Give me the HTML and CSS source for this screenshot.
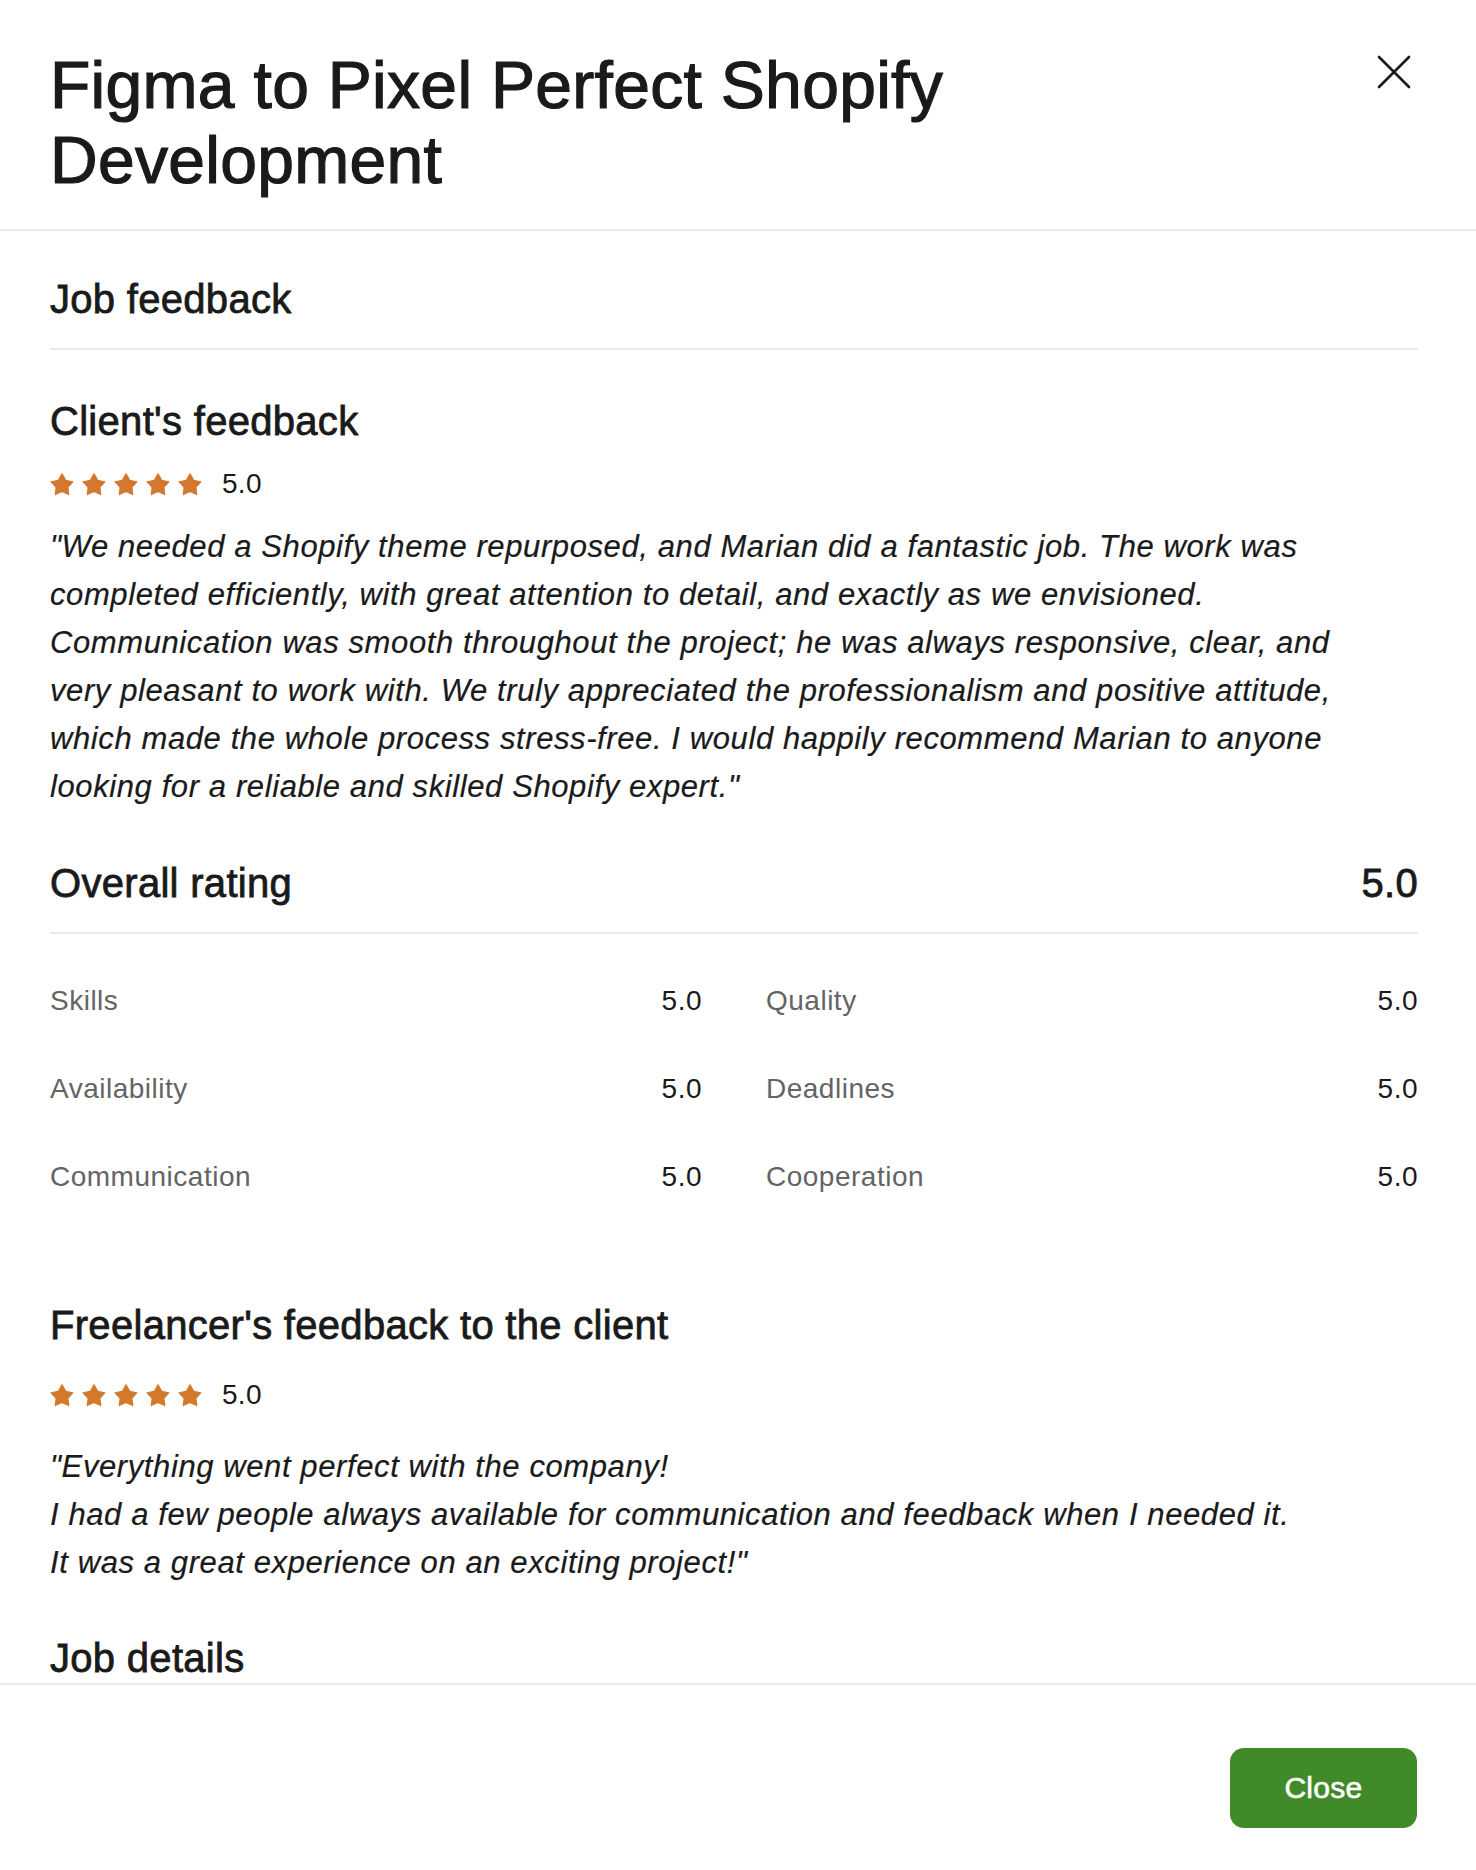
FILE: index.html
```html
<!DOCTYPE html>
<html lang="en">
<head>
<meta charset="utf-8">
<title>Job feedback</title>
<link rel="stylesheet" href="styles.css">
</head>
<body>
<div class="modal">
  <header class="modal-header">
    <h1 class="modal-title">Figma to Pixel Perfect Shopify Development</h1>
    <button class="close-x" aria-label="Close">
      <svg width="34" height="34" viewBox="0 0 34 34"><path d="M2 2 L32 32 M32 2 L2 32" stroke="#1a1a1a" stroke-width="2.6" stroke-linecap="round" fill="none"/></svg>
    </button>
  </header>

  <main class="modal-body">
    <h2 class="section-title job-feedback">Job feedback</h2>

    <h3 class="section-title client-title">Client's feedback</h3>
    <div class="stars-row client-stars">
      <span class="stars">
        <svg class="star" viewBox="0 0 24 23"><path d="M12 0.9L15.6 7.4L22.8 8.8L17.8 14.2L18.7 21.5L12 18.4L5.3 21.5L6.2 14.2L1.2 8.8L8.4 7.4Z"/></svg>
        <svg class="star" viewBox="0 0 24 23"><path d="M12 0.9L15.6 7.4L22.8 8.8L17.8 14.2L18.7 21.5L12 18.4L5.3 21.5L6.2 14.2L1.2 8.8L8.4 7.4Z"/></svg>
        <svg class="star" viewBox="0 0 24 23"><path d="M12 0.9L15.6 7.4L22.8 8.8L17.8 14.2L18.7 21.5L12 18.4L5.3 21.5L6.2 14.2L1.2 8.8L8.4 7.4Z"/></svg>
        <svg class="star" viewBox="0 0 24 23"><path d="M12 0.9L15.6 7.4L22.8 8.8L17.8 14.2L18.7 21.5L12 18.4L5.3 21.5L6.2 14.2L1.2 8.8L8.4 7.4Z"/></svg>
        <svg class="star" viewBox="0 0 24 23"><path d="M12 0.9L15.6 7.4L22.8 8.8L17.8 14.2L18.7 21.5L12 18.4L5.3 21.5L6.2 14.2L1.2 8.8L8.4 7.4Z"/></svg>
      </span>
      <span class="stars-value">5.0</span>
    </div>
    <p class="quote client-quote">"We needed a Shopify theme repurposed, and Marian did a fantastic job. The work was<br>completed efficiently, with great attention to detail, and exactly as we envisioned.<br>Communication was smooth throughout the project; he was always responsive, clear, and<br>very pleasant to work with. We truly appreciated the professionalism and positive attitude,<br>which made the whole process stress-free. I would happily recommend Marian to anyone<br>looking for a reliable and skilled Shopify expert."</p>

    <div class="overall">
      <h3 class="section-title">Overall rating</h3>
      <span class="overall-value">5.0</span>
    </div>

    <div class="ratings">
      <div class="rating"><span class="rating-label">Skills</span><span class="rating-value">5.0</span></div>
      <div class="rating"><span class="rating-label">Quality</span><span class="rating-value">5.0</span></div>
      <div class="rating"><span class="rating-label">Availability</span><span class="rating-value">5.0</span></div>
      <div class="rating"><span class="rating-label">Deadlines</span><span class="rating-value">5.0</span></div>
      <div class="rating"><span class="rating-label">Communication</span><span class="rating-value">5.0</span></div>
      <div class="rating"><span class="rating-label">Cooperation</span><span class="rating-value">5.0</span></div>
    </div>

    <h3 class="section-title freelancer-title">Freelancer's feedback to the client</h3>
    <div class="stars-row freelancer-stars">
      <span class="stars">
        <svg class="star" viewBox="0 0 24 23"><path d="M12 0.9L15.6 7.4L22.8 8.8L17.8 14.2L18.7 21.5L12 18.4L5.3 21.5L6.2 14.2L1.2 8.8L8.4 7.4Z"/></svg>
        <svg class="star" viewBox="0 0 24 23"><path d="M12 0.9L15.6 7.4L22.8 8.8L17.8 14.2L18.7 21.5L12 18.4L5.3 21.5L6.2 14.2L1.2 8.8L8.4 7.4Z"/></svg>
        <svg class="star" viewBox="0 0 24 23"><path d="M12 0.9L15.6 7.4L22.8 8.8L17.8 14.2L18.7 21.5L12 18.4L5.3 21.5L6.2 14.2L1.2 8.8L8.4 7.4Z"/></svg>
        <svg class="star" viewBox="0 0 24 23"><path d="M12 0.9L15.6 7.4L22.8 8.8L17.8 14.2L18.7 21.5L12 18.4L5.3 21.5L6.2 14.2L1.2 8.8L8.4 7.4Z"/></svg>
        <svg class="star" viewBox="0 0 24 23"><path d="M12 0.9L15.6 7.4L22.8 8.8L17.8 14.2L18.7 21.5L12 18.4L5.3 21.5L6.2 14.2L1.2 8.8L8.4 7.4Z"/></svg>
      </span>
      <span class="stars-value">5.0</span>
    </div>
    <p class="quote freelancer-quote">"Everything went perfect with the company!<br>I had a few people always available for communication and feedback when I needed it.<br>It was a great experience on an exciting project!"</p>

    <h3 class="section-title details-title">Job details</h3>
  </main>

  <footer class="modal-footer">
    <button class="btn-close">Close</button>
  </footer>
</div>
</body>
</html>
```

FILE: styles.css
```css
* { box-sizing: border-box; }

html, body {
  margin: 0;
  padding: 0;
  background: #ffffff;
}

body {
  font-family: "Liberation Sans", Arial, Helvetica, sans-serif;
  color: #1a1a1a;
}

.modal {
  display: flex;
  flex-direction: column;
  height: 100vh;
  overflow: hidden;
}

.modal-header {
  display: flex;
  justify-content: space-between;
  align-items: flex-start;
  padding: 48px 65px 31px 50px;
  border-bottom: 2px solid #e9e9e9;
  flex: none;
}

.modal-title {
  margin: 0;
  font-size: 66px;
  line-height: 75px;
  font-weight: normal;
  letter-spacing: 0.3px;
  -webkit-text-stroke: 1.2px #1a1a1a;
  max-width: 980px;
}

.close-x {
  margin-top: 7px;
  width: 34px;
  height: 34px;
  padding: 0;
  border: 0;
  background: transparent;
  display: block;
}

.close-x svg { display: block; }

.modal-body {
  flex: 1;
  overflow: hidden;
  padding: 44px 58px 0 50px;
}

.section-title {
  margin: 0;
  font-size: 40px;
  line-height: 48px;
  font-weight: normal;
  letter-spacing: 0.3px;
  -webkit-text-stroke: 0.8px #1a1a1a;
}

.job-feedback {
  padding-bottom: 25px;
  border-bottom: 2px solid #e9e9e9;
}

.client-title { margin-top: 47px; }

.stars-row {
  display: flex;
  align-items: center;
  height: 32px;
}

.client-stars { margin-top: 23px; }
.freelancer-stars { margin-top: 30px; }

.stars {
  display: flex;
  gap: 8px;
}

.star {
  width: 24px;
  height: 23px;
  fill: #d4782e;
  stroke: #d4782e;
  stroke-width: 1.3;
  stroke-linejoin: round;
  overflow: visible;
  display: block;
}

.stars-value {
  margin-left: 20px;
  font-size: 28px;
  line-height: 32px;
  letter-spacing: 0.3px;
}

.quote {
  margin: 0;
  font-style: italic;
  font-size: 31px;
  line-height: 48px;
  letter-spacing: 0.6px;
  color: #1a1a1a;
  -webkit-text-stroke: 0.2px #1a1a1a;
}

.client-quote { margin-top: 23px; }
.freelancer-quote { margin-top: 32px; }

.overall {
  margin-top: 48px;
  display: flex;
  justify-content: space-between;
  align-items: baseline;
  padding-bottom: 25px;
  border-bottom: 2px solid #e9e9e9;
}

.overall-value {
  font-size: 40px;
  line-height: 48px;
  letter-spacing: 0.3px;
  -webkit-text-stroke: 0.8px #1a1a1a;
}

.ratings {
  margin-top: 47px;
  display: grid;
  grid-template-columns: 1fr 1fr;
  column-gap: 64px;
  row-gap: 48px;
}

.rating {
  display: flex;
  justify-content: space-between;
  font-size: 28px;
  line-height: 40px;
  letter-spacing: 0.5px;
}

.rating-label { color: #646464; }
.rating-value { color: #1a1a1a; }

.freelancer-title { margin-top: 104px; }

.details-title { margin-top: 47px; }

.modal-footer {
  flex: none;
  display: flex;
  justify-content: flex-end;
  padding: 63px 59px 42px 50px;
  border-top: 2px solid #e9e9e9;
}

.btn-close {
  height: 80px;
  width: 187px;
  border: 0;
  border-radius: 14px;
  background: #418a2a;
  color: #ffffff;
  font-family: "Liberation Sans", Arial, Helvetica, sans-serif;
  font-size: 30px;
  letter-spacing: 0.3px;
  -webkit-text-stroke: 0.6px #ffffff;
  padding: 0;
}
```
